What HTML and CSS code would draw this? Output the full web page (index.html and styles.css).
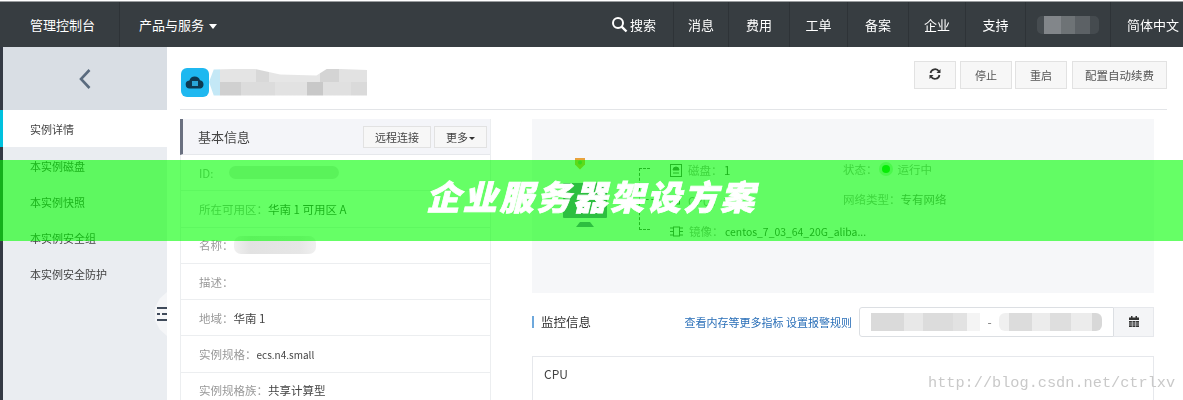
FILE: index.html
```html
<!DOCTYPE html>
<html lang="zh-CN">
<head>
    <meta charset="UTF-8">
    <title>企业服务器架设方案</title>
    <link rel="stylesheet" href="styles.css">
</head>
<body>
<div class="page">
    <div class="topbar">
        <div class="nav-brand">管理控制台</div>
        <div class="nav-products">产品与服务<span class="caret"></span></div>
        <div class="nav-right">
            <div class="nav-item nav-search">
                <svg width="17" height="17" viewBox="0 0 17 17"><circle cx="7" cy="7" r="5" fill="none" stroke="#fff" stroke-width="2"/><path d="M10.600 10.600L15.500 15.500" stroke="#fff" stroke-width="2.400"/></svg>
                搜索
            </div>
            <div class="nav-item nav-msg">消息</div>
            <div class="nav-item nav-wide">费用</div>
            <div class="nav-item nav-order">工单</div>
            <div class="nav-item nav-wide">备案</div>
            <div class="nav-item nav-corp">企业</div>
            <div class="nav-item nav-help">支持</div>
            <div class="nav-item nav-user"><div class="nav-blur"></div></div>
            <div class="nav-lang">简体中文</div>
        </div>
    </div>

    <div class="body-row">
        <div class="strip"><div class="strip-active"></div></div>
        <div class="sidebar">
            <div class="side-back">
                <svg width="14" height="22" viewBox="0 0 14 22"><path d="M11.500 2L3 11l8.500 9" fill="none" stroke="#5a6b7e" stroke-width="2.600"/></svg>
            </div>
            <div class="side-item active">实例详情</div>
            <div class="side-item">本实例磁盘</div>
            <div class="side-item">本实例快照</div>
            <div class="side-item">本实例安全组</div>
            <div class="side-item">本实例安全防护</div>
            <div class="side-toggle">
                <svg width="10" height="14" viewBox="0 0 10 14"><path d="M0 1h10M0 7h3M5 7h5M0 13h10" stroke="#3f4a5a" stroke-width="2.200"/></svg>
            </div>
        </div>

        <div class="main">
            <div class="head">
                <div class="cloud-icon">
                    <svg width="20" height="14" viewBox="0 0 20 14"><path d="M5 13.500a4 4 0 0 1-.6-8A5.600 5.600 0 0 1 15 5.300a4.200 4.200 0 0 1 .4 8.200z" fill="#0d3a52"/><rect x="7" y="6" width="6" height="5" fill="#2aa6d8"/></svg>
                </div>
                <div class="head-blur"></div>
                <div class="head-btns">
                    <div class="btn btn-refresh">
                        <svg width="12" height="12" viewBox="0 0 12 12"><path d="M1.500 5A4.600 4.600 0 0 1 10 3.500M10.500 7A4.600 4.600 0 0 1 2 8.500" fill="none" stroke="#333" stroke-width="1.700"/><path d="M11.500 1v4h-4zM.5 11V7h4z" fill="#333"/></svg>
                    </div>
                    <div class="btn btn-stop">停止</div>
                    <div class="btn btn-restart">重启</div>
                    <div class="btn btn-renew">配置自动续费</div>
                </div>
            </div>

            <div class="columns">
                <div class="info">
                    <div class="info-head">
                        <span class="info-title">基本信息</span>
                        <div class="btn-sm btn-remote">远程连接</div>
                        <div class="btn-sm btn-more">更多<span class="caret-sm"></span></div>
                    </div>
                    <div class="info-row"><span class="lbl">ID:</span><div class="smear smear-id"></div></div>
                    <div class="info-row"><span class="lbl">所在可用区：</span><span class="val">华南 1 可用区 A</span></div>
                    <div class="info-row"><span class="lbl">名称：</span><div class="smear smear-name"></div></div>
                    <div class="info-row"><span class="lbl">描述：</span></div>
                    <div class="info-row"><span class="lbl">地域：</span><span class="val">华南 1</span></div>
                    <div class="info-row"><span class="lbl">实例规格：</span><span class="val val-code">ecs.n4.small</span></div>
                    <div class="info-row"><span class="lbl">实例规格族：</span><span class="val">共享计算型</span></div>
                </div>

                <div class="right">
                    <div class="overview">
                        <div class="server">
                            <svg class="shield" width="12" height="13" viewBox="0 0 12 13"><path d="M1 1h10v6.500L6 12.500 1 7.500z" fill="#e8a33c"/><circle cx="6" cy="5.500" r="2" fill="#7fa04a"/></svg>
                            <svg width="44" height="44" viewBox="0 0 44 44"><rect width="44" height="35" rx="1" fill="#7060a0"/><path d="M17 39h10l4 5H13z" fill="#7060a0"/></svg>
                        </div>
                        <div class="bracket"><div class="bracket-tick"></div></div>
                        <div class="specs">
                            <div class="spec-row">
                                <svg width="12" height="13" viewBox="0 0 12 13"><rect x=".5" y=".5" width="11" height="12" fill="none" stroke="#555"/><path d="M3 6a3 3 0 0 1 6 0zM3 9h6" fill="#555" stroke="#555"/></svg>
                                <span class="lbl">磁盘：</span><span class="val">1</span>
                            </div>
                            <div class="spec-row">
                                <svg width="12" height="13" viewBox="0 0 12 13"><rect x="2.500" y="3" width="7" height="7" fill="none" stroke="#555"/></svg>
                                <span class="lbl">CPU：</span><span class="val">2</span>
                            </div>
                            <div class="spec-row">
                                <svg width="13" height="13" viewBox="0 0 13 13"><rect x="3.500" y="2" width="6" height="9" fill="none" stroke="#555"/><path d="M0 3h3M0 6.500h3M0 10h3M10 3h3M10 6.500h3M10 10h3" stroke="#555"/></svg>
                                <span class="lbl">镜像：</span><span class="val val-image">centos_7_03_64_20G_aliba...</span>
                            </div>
                        </div>
                        <div class="status">
                            <div class="status-row"><span class="lbl">状态：</span><span class="dot"></span><span class="lbl">运行中</span></div>
                            <div class="status-row"><span class="lbl">网络类型：</span><span class="lbl net">专有网络</span></div>
                        </div>
                    </div>

                    <div class="monitor-head">
                        <div class="monitor-title">监控信息</div>
                        <div class="monitor-links"><a>查看内存等更多指标</a> <a>设置报警规则</a></div>
                        <div class="range">
                            <div class="range-input">
                                <div class="range-blur-a"></div>
                                <span class="range-sep">-</span>
                                <div class="range-blur-b"></div>
                            </div>
                            <div class="range-btn">
                                <svg width="10" height="11" viewBox="0 0 10 11"><path d="M2 0h1.500v1.500H6.500V0H8v1.500h2V4H0V1.500h2zM0 5h10v6H0z" fill="#333"/><path d="M0 7h10M0 9h10M3.300 5v6M6.600 5v6" stroke="#e9ebee" stroke-width=".6"/></svg>
                            </div>
                        </div>
                    </div>

                    <div class="chart"><div class="chart-title">CPU</div></div>
                </div>
            </div>
        </div>
    </div>
</div>

<div class="banner">企业服务器架设方案</div>
<div class="watermark">http://blog.csdn.net/ctrlxv</div>
</body>
</html>
```

FILE: styles.css
```css
html, body {
    margin: 0;
    padding: 0;
    height: 400px;
    overflow: hidden;
    background: #fff;
}
body {
    position: relative;
    font-family: "Noto Sans CJK SC", "Noto Sans", sans-serif;
    font-size: 12px;
    color: #333;
}
.page {
    height: 400px;
    display: flex;
    flex-direction: column;
    overflow: hidden;
    filter: blur(0.4px);
}

/* top bar */
.topbar {
    height: 46px;
    margin-top: 1px;
    flex: none;
    display: flex;
    align-items: center;
    box-sizing: border-box;
    background: #373d41;
    border-top: 1px solid #9a9d9f;
    color: #fff;
    font-size: 13px;
}
.nav-brand {
    width: 120px;
    height: 100%;
    box-sizing: border-box;
    padding-left: 30px;
    line-height: 45px;
    border-right: 1px solid #2e3337;
}
.nav-products {
    padding-left: 19px;
}
.caret {
    display: inline-block;
    margin-left: 5px;
    vertical-align: middle;
    border-left: 4px solid transparent;
    border-right: 4px solid transparent;
    border-top: 5px solid #fff;
}
.nav-right {
    margin-left: auto;
    display: flex;
    height: 100%;
}
.nav-item {
    display: flex;
    align-items: center;
    justify-content: center;
    height: 100%;
    box-sizing: border-box;
    border-right: 1px solid #2e3337;
}
.nav-search {
    width: 74px;
    gap: 2px;
    justify-content: flex-end;
    padding-right: 17px;
}
.nav-msg { width: 55px; }
.nav-wide { width: 61px; }
.nav-order { width: 58px; }
.nav-corp { width: 57px; }
.nav-help { width: 60px; }
.nav-user { width: 85px; }
.nav-lang {
    width: 72px;
    box-sizing: border-box;
    padding-left: 16px;
    line-height: 45px;
    white-space: nowrap;
}
.nav-blur {
    width: 62px;
    height: 18px;
    border-radius: 5px;
    background: linear-gradient(90deg, #464c50 0 12%, #82868a 12% 38%, #6e7376 38% 62%, #5c6165 62% 85%, #454b4f 85%);
}

.body-row {
    flex: 1;
    display: flex;
    min-height: 0;
}
.strip {
    width: 3px;
    flex: none;
    padding-top: 63px;
    background: #343a44;
}
.strip-active {
    height: 37px;
    background: #00c1de;
}

/* sidebar */
.sidebar {
    position: relative;
    width: 164px;
    flex: none;
    background: #eaedf1;
    color: #444;
    font-size: 11px;
}
.side-back {
    height: 63px;
    display: flex;
    align-items: center;
    justify-content: center;
    background: #d9dee4;
}
.side-item {
    height: 36px;
    line-height: 38px;
    padding-left: 27px;
}
.side-item.active {
    height: 37px;
    background: #fff;
}
.side-toggle {
    position: absolute;
    left: 152px;
    top: 245px;
    width: 12px;
    height: 44px;
    display: flex;
    align-items: center;
    background: #f5f6f8;
    clip-path: polygon(100% 0, 100% 100%, 40% 85%, 0 65%, 0 35%, 40% 15%);
}
.side-toggle svg {
    margin-left: 2px;
}

/* main */
.main {
    flex: 1;
    min-width: 0;
    padding: 0 16px 0 13px;
}
.head {
    height: 62px;
    display: flex;
    align-items: center;
    border-bottom: 1px solid #e3e5e8;
}
.cloud-icon {
    width: 28px;
    height: 29px;
    margin: 8px 0 0 1px;
    display: flex;
    align-items: center;
    justify-content: center;
    background: #1fb8f0;
    border-radius: 6px;
}
.head-blur {
    width: 158px;
    height: 27px;
    margin-top: 8px;
    background:
        linear-gradient(90deg, #c4e8f6 0 7%, #e4e4e4 7% 30%, #d8d8d8 30% 38%, #e6e6e6 38% 70%, #d4d4d4 70% 82%, #e2e2e2 82%) top / 100% 13px no-repeat,
        linear-gradient(90deg, #c4e8f6 0 7%, #d0d0d0 7% 20%, #dcdcdc 20% 42%, #e2e2e2 42% 62%, #c8c8c8 62% 72%, #e0e0e0 72% 90%, #dadada 90%) bottom / 100% 14px no-repeat;
    clip-path: polygon(3% 4%, 28% 0, 45% 22%, 68% 26%, 75% 0, 100% 6%, 100% 100%, 3% 100%, 0 50%);
}
.head-btns {
    margin-left: auto;
    display: flex;
    margin-top: -6px;
}
.btn {
    height: 28px;
    line-height: 26px;
    box-sizing: border-box;
    text-align: center;
    background: #f7f7f7;
    border: 1px solid #e2e2e2;
    font-size: 11px;
    color: #555;
}
.btn-refresh { width: 42px; margin-right: 4px; }
.btn-stop { width: 52px; margin-right: 3px; }
.btn-restart { width: 52px; margin-right: 5px; }
.btn-renew { width: 95px; font-size: 11.5px; }

.columns {
    display: flex;
    padding-top: 9px;
    align-items: flex-start;
}

/* info panel */
.info {
    width: 311px;
    flex: none;
    box-sizing: border-box;
    border-right: 1px solid #eceef0;
    border-left: 1px solid #eceef0;
}
.info-head {
    height: 36px;
    margin-left: -1px;
    box-sizing: border-box;
    display: flex;
    align-items: center;
    gap: 3px;
    padding-right: 3px;
    background: #f4f5f9;
    border-left: 3px solid #6a7080;
    border-bottom: 1px solid #e6e8ec;
}
.info-title {
    margin-right: auto;
    padding-left: 15px;
    color: #444;
    font-size: 13px;
}
.btn-sm {
    height: 22px;
    line-height: 20px;
    box-sizing: border-box;
    text-align: center;
    background: #f7f7f7;
    border: 1px solid #e2e2e2;
    font-size: 11px;
    color: #444;
}
.btn-remote { width: 68px; }
.btn-more { width: 53px; }
.caret-sm {
    display: inline-block;
    margin-left: 1px;
    vertical-align: middle;
    border-left: 3px solid transparent;
    border-right: 3px solid transparent;
    border-top: 3px solid #333;
}
.info-row {
    height: 36.3px;
    box-sizing: border-box;
    display: flex;
    align-items: center;
    padding-left: 18px;
    border-bottom: 1px solid #eceef0;
}
.lbl {
    color: #999;
    font-size: 11.5px;
    white-space: nowrap;
}
.val {
    color: #444;
    font-size: 11.5px;
    white-space: nowrap;
}
.val-code {
    font-size: 10px;
}
.val-image {
    font-size: 10.4px;
}
.smear {
    height: 13px;
    border-radius: 7px;
    background: #e2e2e2;
}
.smear-id {
    width: 110px;
    margin-left: 16px;
}
.smear-name {
    width: 82px;
    height: 18px;
    background: linear-gradient(90deg, #f0f0f0, #e2e2e2 20%, #e6e6e6 80%, #f0f0f0);
}

/* right column */
.right {
    flex: 1;
    min-width: 0;
    padding: 0 13px 0 41px;
}
.overview {
    height: 174px;
    box-sizing: border-box;
    display: flex;
    padding: 38px 0 0 31px;
    background: #f6f7f9;
    color: #555;
}
.server {
    width: 44px;
    flex: none;
    display: flex;
    flex-direction: column;
    align-items: center;
}
.shield {
    margin: 0 10px 13px 0;
}
.bracket {
    width: 11px;
    height: 62px;
    flex: none;
    margin: 11px 20px 0 32px;
    box-sizing: border-box;
    display: flex;
    align-items: center;
    border: 1px dashed #555;
    border-right: none;
}
.bracket-tick {
    width: 20px;
    flex: none;
    border-top: 1px dashed #555;
}
.specs {
    width: 173px;
    flex: none;
    display: flex;
    flex-direction: column;
    gap: 12.5px;
    padding-top: 4px;
}
.spec-row,
.status-row {
    display: flex;
    align-items: center;
    height: 18px;
}
.spec-row svg {
    flex: none;
    margin-right: 6px;
}
.spec-row .lbl {
    width: 36px;
    flex: none;
}
.status {
    display: flex;
    flex-direction: column;
    gap: 12px;
    padding-top: 3px;
}
.dot {
    width: 8px;
    height: 8px;
    margin: 0 8px 0 4px;
    border-radius: 50%;
    background: #0fd00f;
    box-shadow: 0 0 0 3px rgba(15, 208, 15, 0.25);
}
.net {
    color: #777;
}

.monitor-head {
    height: 63px;
    box-sizing: border-box;
    display: flex;
    align-items: center;
    padding-bottom: 6px;
}
.monitor-title {
    margin-right: auto;
    padding-left: 7px;
    border-left: 2px solid #6ea8dc;
    line-height: 12px;
    font-size: 12.5px;
}
.monitor-links {
    margin-right: 7px;
    color: #2a6fb8;
    font-size: 11px;
    white-space: nowrap;
}
.range {
    display: flex;
    height: 30px;
}
.range-input {
    width: 255px;
    box-sizing: border-box;
    display: flex;
    align-items: center;
    padding-left: 11px;
    border: 1px solid #dcdfe3;
    border-radius: 3px 0 0 3px;
}
.range-blur-a {
    width: 109px;
    height: 18px;
    background: linear-gradient(90deg, #dadada 0 30%, #e8e8e8 30% 48%, #dcdcdc 48% 75%, #e2e2e2 75% 88%, #f4f4f4 88%);
}
.range-sep {
    width: 19px;
    text-align: center;
    color: #777;
}
.range-blur-b {
    width: 103px;
    height: 18px;
    border-radius: 6px;
    background: linear-gradient(90deg, #f0f0f0 0 10%, #dcdcdc 10% 32%, #ececec 32% 50%, #dedede 50% 70%, #ececec 70% 90%, #d8d8d8 90%);
}
.range-btn {
    width: 40px;
    box-sizing: border-box;
    display: flex;
    align-items: center;
    justify-content: center;
    background: #f4f5f7;
    border: 1px solid #e6e8ec;
    border-left: none;
}
.chart {
    height: 60px;
    box-sizing: border-box;
    padding: 8px 11px;
    border: 1px solid #e6e8ec;
}
.chart-title {
    color: #444;
}

/* overlays */
.banner {
    position: absolute;
    left: 0;
    right: 0;
    top: 160px;
    height: 81px;
    line-height: 72px;
    text-align: center;
    background: rgba(0, 255, 0, 0.6);
    color: #fff;
    font-size: 34px;
    font-weight: 900;
    font-style: italic;
    letter-spacing: 2.8px;
    -webkit-text-stroke: 0.8px #fff;
    white-space: nowrap;
}
.watermark {
    position: absolute;
    left: 928px;
    top: 374px;
    font-family: "Liberation Mono", monospace;
    font-size: 15.25px;
    color: #c9c9c9;
    white-space: nowrap;
}
```
